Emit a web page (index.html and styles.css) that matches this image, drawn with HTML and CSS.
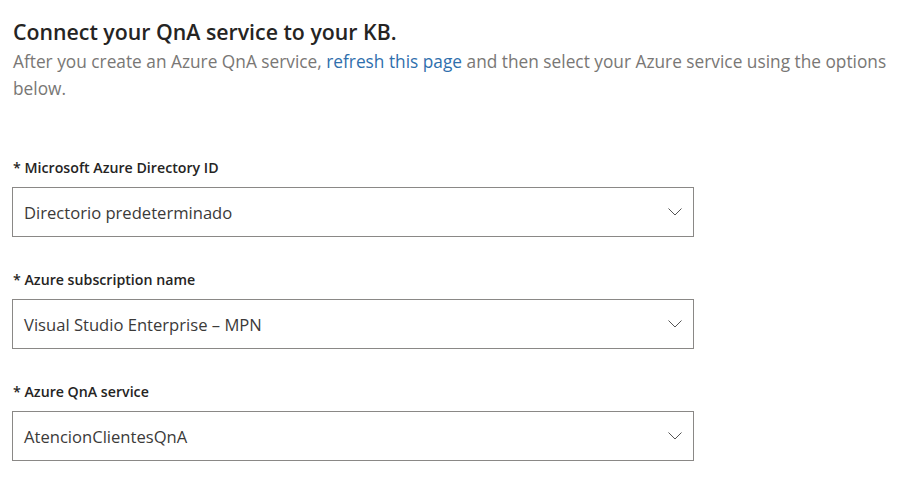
FILE: index.html
```html
<!DOCTYPE html>
<html lang="en">
<head>
<meta charset="utf-8">
<title>Connect your QnA service</title>
<link rel="stylesheet" href="styles.css">
</head>
<body>
<main class="page">
  <h1 class="title">Connect your QnA service to your KB.</h1>
  <p class="intro">After you create an Azure QnA service, <a class="link" href="#">refresh this page</a> and then select your Azure service using the options below.</p>

  <div class="field">
    <label class="label">* Microsoft Azure Directory ID</label>
    <div class="select">
      <span class="value">Directorio predeterminado</span>
      <svg class="chevron" width="14" height="8" viewBox="0 0 14 8"><path d="M0.5 0.5 L7 7 L13.5 0.5" fill="none" stroke="#555" stroke-width="1"/></svg>
    </div>
  </div>

  <div class="field">
    <label class="label">* Azure subscription name</label>
    <div class="select">
      <span class="value">Visual Studio Enterprise – MPN</span>
      <svg class="chevron" width="14" height="8" viewBox="0 0 14 8"><path d="M0.5 0.5 L7 7 L13.5 0.5" fill="none" stroke="#555" stroke-width="1"/></svg>
    </div>
  </div>

  <div class="field">
    <label class="label">* Azure QnA service</label>
    <div class="select">
      <span class="value">AtencionClientesQnA</span>
      <svg class="chevron" width="14" height="8" viewBox="0 0 14 8"><path d="M0.5 0.5 L7 7 L13.5 0.5" fill="none" stroke="#555" stroke-width="1"/></svg>
    </div>
  </div>
</main>
</body>
</html>
```

FILE: styles.css
```css
html, body {
  margin: 0;
  padding: 0;
  background: #ffffff;
}
body {
  font-family: "Open Sans", "Noto Sans", "Liberation Sans", sans-serif;
  color: #252423;
}
.page {
  padding: 16px 12px 0 13px;
}
.title {
  margin: 0;
  font-size: 21.3px;
  font-weight: 600;
  line-height: 32px;
  color: #252423;
}
.intro {
  margin: 0 0 56px 0;
  font-size: 17.3px;
  line-height: 27px;
  color: #797775;
}
.link {
  color: #2f6fad;
  text-decoration: none;
}
.field {
  margin-bottom: 33px;
}
.label {
  display: block;
  font-size: 14.2px;
  font-weight: 600;
  line-height: 20px;
  margin-bottom: 9px;
  color: #252423;
}
.select {
  box-sizing: border-box;
  width: 682px;
  height: 50px;
  margin-left: -1px;
  border: 1px solid #8a8886;
  display: flex;
  align-items: center;
  justify-content: space-between;
  padding: 0 11px 0 11px;
}
.value {
  font-size: 16.6px;
  color: #3b3a39;
}
.chevron {
  display: block;
}
```
